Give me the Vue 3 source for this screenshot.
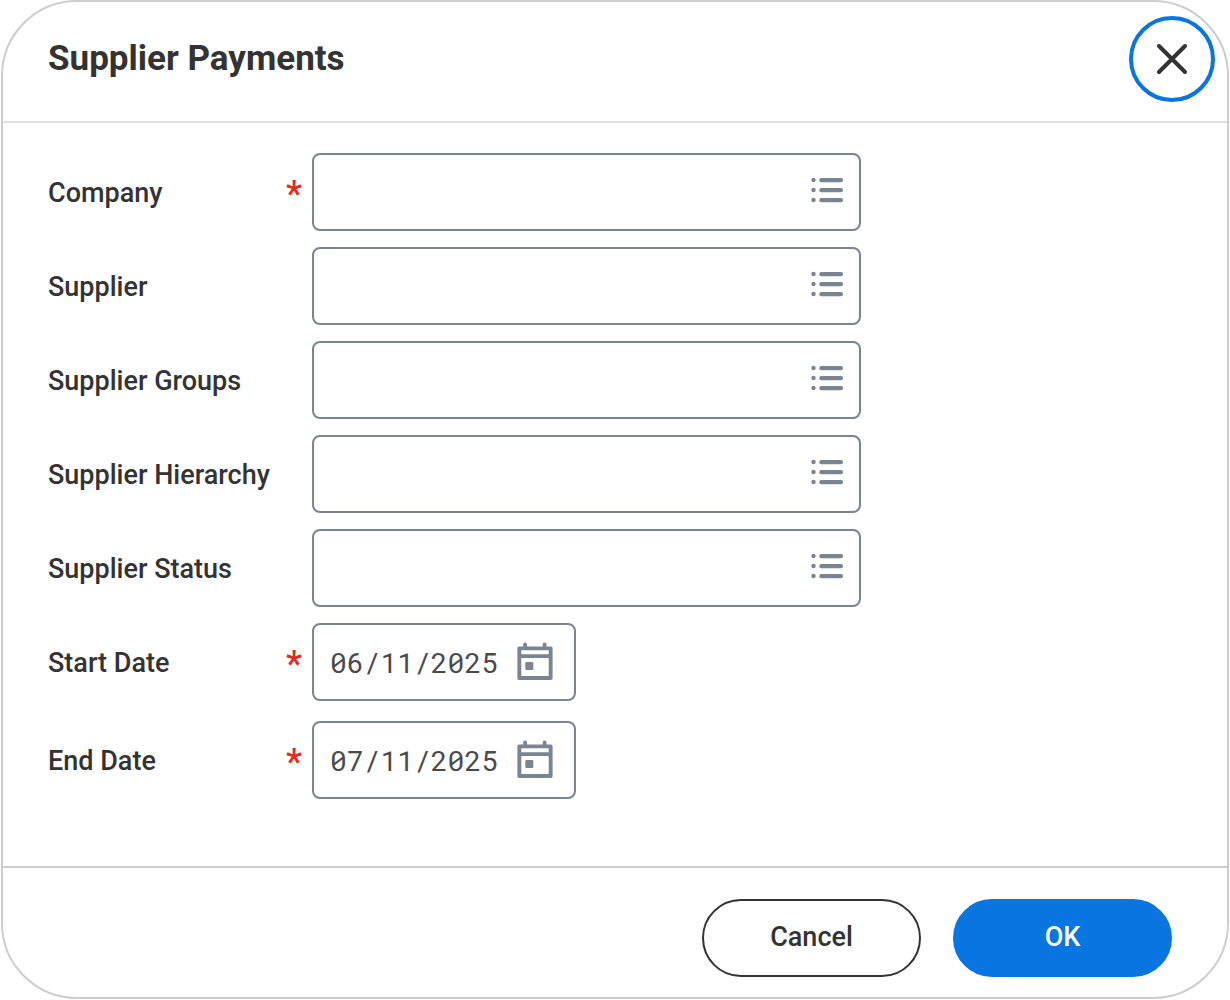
<template>
  <form class="dialog" role="dialog" aria-labelledby="dialog-title" @submit.prevent>
    <header class="header">
      <h1 id="dialog-title" class="title">Supplier Payments</h1>
      <button type="button" class="close" aria-label="Close">
        <svg width="32" height="32" viewBox="0 0 32 32">
          <path d="M3 3L29 29M29 3L3 29" fill="none" stroke="currentColor" stroke-width="4" stroke-linecap="round" />
        </svg>
      </button>
    </header>

    <main class="body">
      <div v-for="field in fields" :key="field.id" class="row">
        <label class="label" :for="field.id">{{ field.label }}</label>
        <span class="required"><span v-if="field.required">*</span></span>
        <div class="control">
          <input :id="field.id" v-model="field.value" class="input" type="text" :required="field.required" />
          <button type="button" class="icon-button" :aria-label="`${field.label} options`">
            <svg width="32" height="26" viewBox="0 0 32 26">
              <g fill="currentColor">
                <circle cx="2.5" cy="3" r="2.2" />
                <circle cx="2.5" cy="13" r="2.2" />
                <circle cx="2.5" cy="23" r="2.2" />
                <rect x="8.3" y="1" width="23.7" height="4.2" rx="2" />
                <rect x="8.3" y="11" width="23.7" height="4.2" rx="2" />
                <rect x="8.3" y="21" width="23.7" height="4.2" rx="2" />
              </g>
            </svg>
          </button>
        </div>
      </div>

      <div v-for="date in dates" :key="date.id" class="row date-row">
        <label class="label" :for="date.id">{{ date.label }}</label>
        <span class="required">*</span>
        <div class="control date">
          <input :id="date.id" v-model="date.value" class="input date-input" type="text" required />
          <button type="button" class="icon-button" :aria-label="`Pick ${date.label}`">
            <svg width="36" height="38" viewBox="0 0 36 38">
              <path
                fill="currentColor"
                fill-rule="evenodd"
                d="M2 4.5H6.2V2.5a1.9 1.9 0 0 1 3.8 0V4.5H25.7V2.5a1.9 1.9 0 0 1 3.8 0V4.5H34a1.6 1.6 0 0 1 1.6 1.6V36.3a1.6 1.6 0 0 1-1.6 1.6H2a1.6 1.6 0 0 1-1.6-1.6V6.1A1.6 1.6 0 0 1 2 4.5ZM4.3 8.3V12.2H31.7V8.3ZM4.3 16V34H31.7V16Z"
              />
              <rect x="8.3" y="20" width="8" height="8" rx="1.2" fill="currentColor" />
            </svg>
          </button>
        </div>
      </div>
    </main>

    <footer class="footer">
      <button type="button" class="button">Cancel</button>
      <button type="submit" class="button primary">OK</button>
    </footer>
  </form>
</template>

<script setup>
import { ref } from 'vue'

const fields = ref([
  { id: 'company', label: 'Company', value: '', required: true },
  { id: 'supplier', label: 'Supplier', value: '', required: false },
  { id: 'groups', label: 'Supplier Groups', value: '', required: false },
  { id: 'hierarchy', label: 'Supplier Hierarchy', value: '', required: false },
  { id: 'status', label: 'Supplier Status', value: '', required: false },
])

const dates = ref([
  { id: 'start-date', label: 'Start Date', value: '06/11/2025' },
  { id: 'end-date', label: 'End Date', value: '07/11/2025' },
])
</script>

<style>
body {
  margin: 0;
  background: #fff;
}
</style>

<style scoped>
.dialog {
  box-sizing: border-box;
  margin: 0 1px;
  border: 2px solid #cdcdcd;
  border-radius: 76px;
  background: #fff;
  color: #333;
  font-family: Roboto, "Liberation Sans", sans-serif;
  font-size: 27px;
}
.header {
  display: flex;
  align-items: center;
  justify-content: space-between;
  padding: 14px 12px 19px 45px;
  border-bottom: 2px solid #e0e1e6;
}
.title {
  margin: 0;
  font-size: 35px;
  font-weight: 700;
  line-height: 44px;
}
.close {
  display: flex;
  align-items: center;
  justify-content: center;
  width: 86px;
  height: 86px;
  padding: 0;
  border: 4px solid #0875e1;
  border-radius: 50%;
  background: #fff;
  color: #333;
  cursor: pointer;
}
.body {
  display: flex;
  flex-direction: column;
  gap: 16px;
  padding: 30px 45px 67px;
}
.row {
  display: flex;
  align-items: center;
}
.date-row + .date-row {
  margin-top: 4px;
}
.label {
  width: 238px;
  padding-top: 2px;
  font-weight: 500;
  line-height: 32px;
}
.required {
  width: 26px;
  padding-top: 4px;
  color: #de2e21;
  font-size: 36px;
  font-weight: 500;
  line-height: 40px;
}
.control {
  display: flex;
  align-items: center;
  box-sizing: border-box;
  flex: 0 1 549px;
  min-width: 0;
  height: 78px;
  padding: 0 16px;
  border: 2px solid #7b858f;
  border-radius: 8px;
}
.date {
  flex-basis: 264px;
  padding-right: 21px;
}
.input {
  flex: 1;
  min-width: 0;
  height: 70px;
  padding: 0;
  border: 0;
  outline: 0;
  background: transparent;
  color: #4a4a4a;
  font: inherit;
}
.date-input {
  font-family: "Roboto Mono", "Liberation Mono", monospace;
  font-size: 28px;
}
.icon-button {
  display: flex;
  padding: 0 0 4px;
  border: 0;
  background: transparent;
  color: #7b858f;
  cursor: pointer;
}
.date .icon-button {
  padding-bottom: 2px;
}
.footer {
  display: flex;
  justify-content: flex-end;
  gap: 32px;
  padding: 31px 55px 20px;
  border-top: 2px solid #cdcdcd;
}
.button {
  box-sizing: border-box;
  width: 219px;
  height: 78px;
  padding: 0 0 2px;
  border: 2px solid #333;
  border-radius: 39px;
  background: #fff;
  color: #333;
  font-family: inherit;
  font-size: 27px;
  font-weight: 500;
  cursor: pointer;
}
.primary {
  border-color: #0875e1;
  background: #0875e1;
  color: #fff;
}
</style>
